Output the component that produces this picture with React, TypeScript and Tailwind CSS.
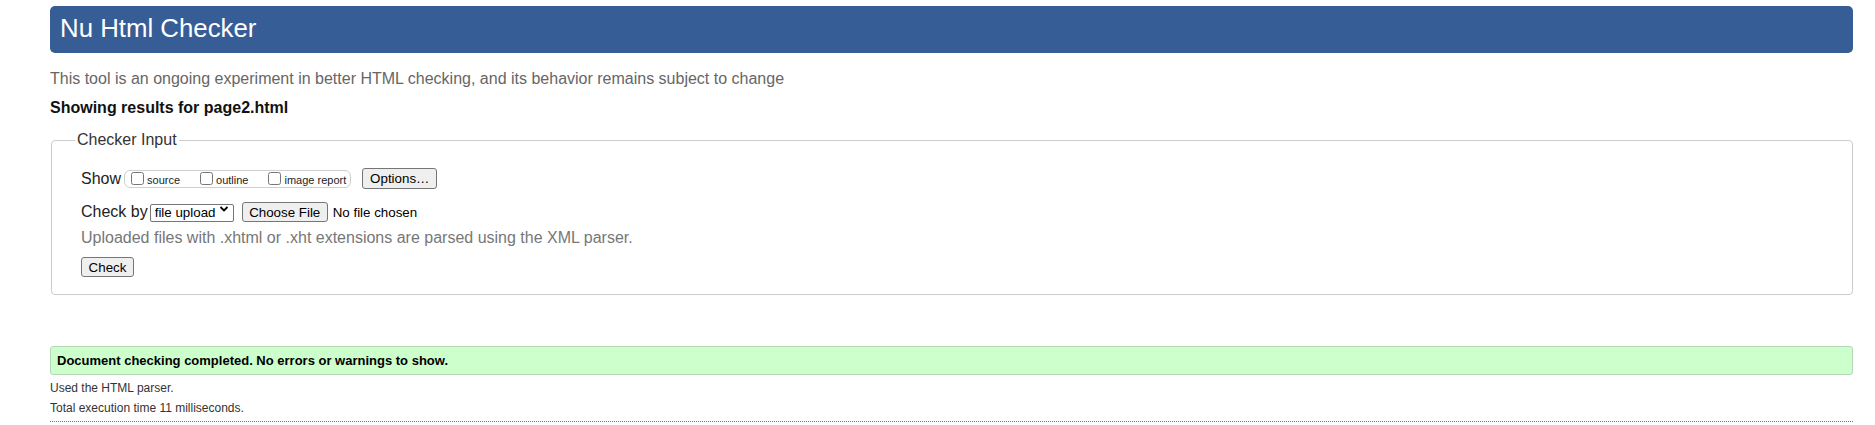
import React from "react";

function Btn({ children, className = "" }: { children: React.ReactNode; className?: string }) {
  return (
    <button
      type="button"
      className={
        "box-border flex items-center justify-center bg-[#efefef] border border-[#767676] rounded-[3px] text-[13.33px] leading-[15px] text-black px-[6px] " +
        className
      }
    >
      {children}
    </button>
  );
}

function Check({ label, last = false }: { label: string; last?: boolean }) {
  return (
    <label className={"flex items-center " + (last ? "pr-[4px]" : "pr-[16px]")}>
      <input type="checkbox" className="m-0 ml-[4px] mr-[3px] w-[13px] h-[13px]" />
      <span className="text-[11px] leading-[13px] mt-[3px] text-[#222]">{label}</span>
    </label>
  );
}

export default function App() {
  return (
    <div className="bg-white min-h-[425px] pl-[50px] pr-[22px] pt-[6px] font-['Liberation_Sans',Arial,sans-serif] text-[#222]">
      <header className="h-[47px] bg-[#365d95] rounded-[5px] pl-[10px] pt-[8px]">
        <h1 className="text-white text-[25.8px] leading-[29px] font-normal">Nu Html Checker</h1>
      </header>

      <p className="mt-[16px] text-[16px] leading-[20px] text-[#666]">
        This tool is an ongoing experiment in better HTML checking, and its behavior remains subject to change
      </p>

      <p className="mt-[9px] text-[16px] leading-[20px] font-bold text-[#111]">Showing results for page2.html</p>

      <fieldset className="mt-[12px] ml-[1px] border border-[#cccccc] rounded-[4px] pb-[17px]">
        <legend className="ml-[23px] px-[2px] text-[16px] leading-[20px] text-[#333]">Checker Input</legend>

        <div className="pl-[29px] pt-[18px]">
          <div className="flex items-center h-[21px]">
            <span className="text-[16px] leading-[20px] text-[#222]">Show</span>
            <div className="ml-[3px] flex items-center h-[18px] border border-[#cfcfcf] rounded-[6px] pl-[2px]">
              <Check label="source" />
              <Check label="outline" />
              <Check label="image report" last />
            </div>
            <Btn className="ml-[11px] w-[75px] h-[21px]">Options…</Btn>
          </div>

          <div className="flex items-center h-[20px] mt-[13px]">
            <span className="text-[16px] leading-[20px] text-[#222]">Check by</span>
            <div className="relative ml-[2px]">
              <select className="appearance-none box-border w-[84px] h-[18px] border border-[#767676] rounded-[2px] bg-white text-[13.33px] leading-[15px] text-black pl-[4px] pr-[16px]">
                <option>file upload</option>
              </select>
              <svg
                className="absolute right-[5px] top-[5px] pointer-events-none"
                width="10"
                height="8"
                viewBox="0 0 10 8"
              >
                <path d="M1.5 2 L5 5.5 L8.5 2" fill="none" stroke="#000" strokeWidth="1.8" />
              </svg>
            </div>
            <Btn className="ml-[8px] w-[86px] h-[20px]">Choose File</Btn>
            <span className="ml-[5px] text-[13.33px] leading-[15px] text-black">No file chosen</span>
          </div>

          <p className="mt-[6px] text-[16px] leading-[20px] text-[#777]">
            Uploaded files with .xhtml or .xht extensions are parsed using the XML parser.
          </p>

          <Btn className="mt-[9px] w-[53px] h-[20px]">Check</Btn>
        </div>
      </fieldset>

      <div className="mt-[51px] h-[29px] bg-[#ccffcc] border border-[#b4d8b4] rounded-[3px] flex items-center pl-[6px]">
        <span className="text-[13px] leading-[15px] font-bold text-black">
          Document checking completed. No errors or warnings to show.
        </span>
      </div>

      <p className="mt-[3px] text-[12px] leading-[20px] text-[#333]">Used the HTML parser.</p>
      <p className="text-[12px] leading-[20px] text-[#333]">Total execution time 11 milliseconds.</p>
      <div className="mt-[3px] border-t border-dotted border-[#777]"></div>
    </div>
  );
}
